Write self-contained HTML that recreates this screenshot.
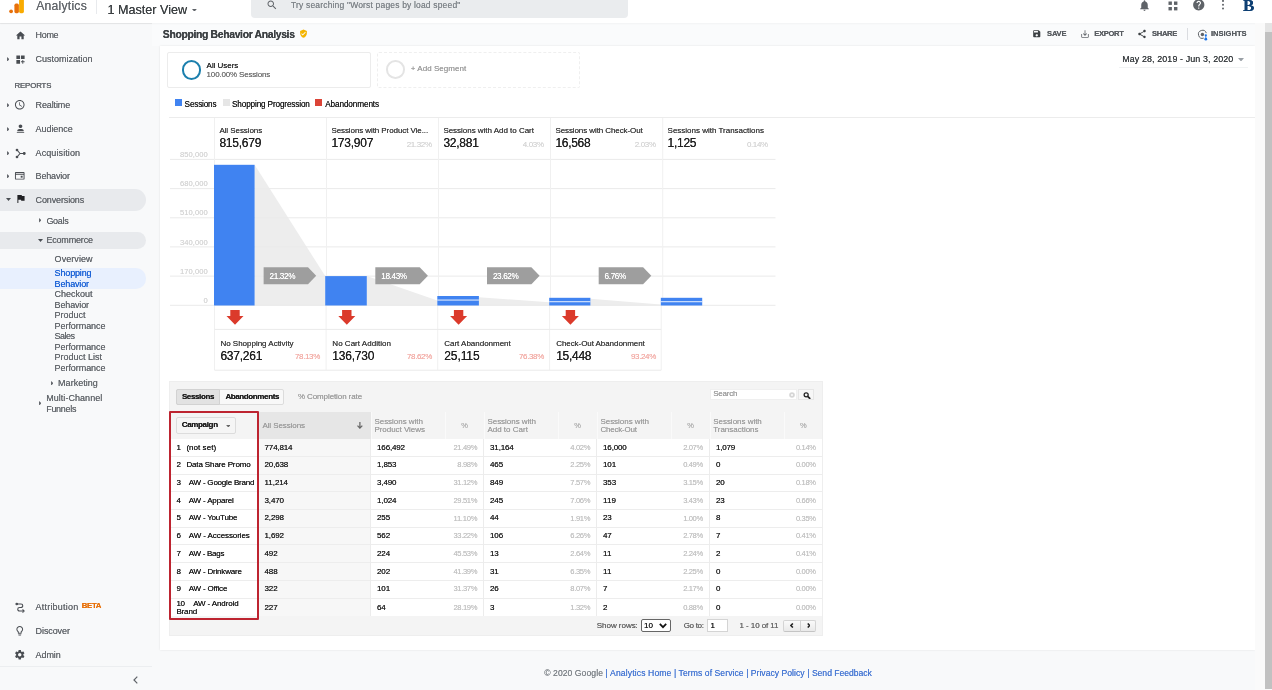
<!DOCTYPE html>
<html lang="en"><head><meta charset="utf-8"><title>Shopping Behavior Analysis - Analytics</title>
<style>
html,body{margin:0;padding:0}
body{width:1272px;height:690px;overflow:hidden;position:relative;background:#f8f9fa;font-family:"Liberation Sans",sans-serif;}
#app{position:absolute;left:0;top:0;width:1272px;height:690px;overflow:hidden;will-change:transform}
#app>div,#app>svg,.t,.i{position:absolute}
.t{white-space:nowrap;display:block;text-shadow:0 0 .4px currentColor}
a.t{text-decoration:none}

</style></head>
<body>
<div id="app">
<div style="left:152px;top:23px;width:1113px;height:23px;background:#fafbfc;"></div>
<div style="left:159.5px;top:45.7px;width:1095px;height:604px;background:#fff;box-shadow:0 0 2px rgba(0,0,0,.10);"></div>
<div style="left:0px;top:0px;width:1272px;height:23.4px;background:#fff;box-shadow:0 1px 1.5px rgba(0,0,0,.035);"></div>
<div style="left:0px;top:23px;width:152px;height:1px;background:linear-gradient(rgba(0,0,0,.09),rgba(0,0,0,.02));"></div>
<div style="left:1255px;top:23px;width:17px;height:667px;background:#fafafa;"></div>
<div style="left:1265px;top:23px;width:7px;height:9px;background:#e4e4e4;"></div>
<div style="left:1265px;top:32px;width:7px;height:656.5px;background:#c1c1c1;"></div>
<svg class="i" style="left:8px;top:0" width="20" height="14" viewBox="0 0 20 14"><rect x="11.1" y="-4" width="4.8" height="17.2" rx="1.6" fill="#f9ab00"/><rect x="6.4" y="3.6" width="4.5" height="9.6" rx="1.6" fill="#e8710a"/><circle cx="3.1" cy="11.3" r="1.9" fill="#e8710a"/></svg>
<span class="t" id="t0" style="top:-2.00px;font-size:12.2px;line-height:16px;color:#64686d;left:36.2px;letter-spacing:0.224px;">Analytics</span>
<div style="left:96px;top:0px;width:1px;height:14px;background:#e8eaed;"></div>
<span class="t" id="t1" style="top:2.00px;font-size:12.6px;line-height:17px;color:#3c4043;left:107.4px;letter-spacing:0.011px;">1 Master View</span>
<svg class="i" style="left:192.4px;top:8.6px" width="4.8" height="2.8" viewBox="0 0 7 4"><path d="M0 0h7L3.5 4z" fill="#5f6368"/></svg>
<div style="left:250.5px;top:0px;width:377.5px;height:18.3px;background:#eaecee;border-radius:0 0 4px 4px;"></div>
<svg class="i" style="left:265.50px;top:-1.00px" width="12" height="12" viewBox="0 0 24 24" fill="#5f6368" ><path d="M15.5 14h-.79l-.28-.27C15.41 12.59 16 11.11 16 9.5 16 5.91 13.09 3 9.5 3S3 5.91 3 9.5 5.91 16 9.5 16c1.61 0 3.09-.59 4.23-1.57l.27.28v.79l5 4.99L20.49 19l-4.99-5zm-6 0C7.01 14 5 11.99 5 9.5S7.01 5 9.5 5 14 7.01 14 9.5 11.99 14 9.5 14z"/></svg>
<span class="t" id="t2" style="top:-1.00px;font-size:8.5px;line-height:12px;color:#80868b;left:291px;letter-spacing:0.173px;">Try searching "Worst pages by load speed"</span>
<svg class="i" style="left:1138.00px;top:-1.50px" width="13" height="13" viewBox="0 0 24 24" fill="#5f6368" ><path d="M12 22c1.1 0 2-.9 2-2h-4c0 1.1.89 2 2 2zm6-6v-5c0-3.07-1.64-5.64-4.5-6.32V4c0-.83-.67-1.5-1.5-1.5s-1.5.67-1.5 1.5v.68C7.63 5.36 6 7.92 6 11v5l-2 2v1h16v-1l-2-2z"/></svg>
<svg class="i" style="left:1168px;top:0.5px" width="10" height="10" viewBox="0 0 10 10" fill="#5f6368"><rect x="0.5" y="0.5" width="3.4" height="3.4"/><rect x="6" y="0.5" width="3.4" height="3.4"/><rect x="0.5" y="6" width="3.4" height="3.4"/><rect x="6" y="6" width="3.4" height="3.4"/></svg>
<svg class="i" style="left:1192.25px;top:-1.75px" width="13.5" height="13.5" viewBox="0 0 24 24" fill="#5f6368" ><path d="M12 2C6.48 2 2 6.48 2 12s4.48 10 10 10 10-4.48 10-10S17.52 2 12 2zm1 17h-2v-2h2v2zm2.07-7.75l-.9.92C13.45 12.9 13 13.5 13 15h-2v-.5c0-1.1.45-2.1 1.17-2.83l1.24-1.26c.37-.36.59-.86.59-1.41 0-1.1-.9-2-2-2s-2 .9-2 2H8c0-2.21 1.79-4 4-4s4 1.79 4 4c0 .88-.36 1.68-.93 2.25z"/></svg>
<svg class="i" style="left:1220.5px;top:-1px" width="4" height="13" viewBox="0 0 4 13" fill="#5f6368"><circle cx="2" cy="1.9" r="1"/><circle cx="2" cy="5.7" r="1"/><circle cx="2" cy="9.5" r="1"/></svg>
<span class="t" id="t3" style="top:-4.00px;font-size:17px;line-height:20px;color:#0d3f73;font-weight:700;left:1243px;font-family:'Liberation Serif',serif;">B</span>
<div style="left:0px;top:189px;width:146px;height:21.5px;background:#e8eaed;border-radius:0 11px 11px 0;"></div>
<div style="left:0px;top:231.5px;width:146px;height:17px;background:#e8eaed;border-radius:0 9px 9px 0;"></div>
<div style="left:0px;top:267.8px;width:146px;height:21.6px;background:#e8f0fe;border-radius:0 10px 10px 0;"></div>
<svg class="i" style="left:14.50px;top:29.50px" width="11" height="11" viewBox="0 0 24 24" fill="#494d52" ><path d="M10 20v-6h4v6h5v-8h3L12 3 2 12h3v8z"/></svg>
<span class="t" id="t4" style="top:29.00px;font-size:9px;line-height:12px;color:#64686d;left:35.6px;letter-spacing:-0.329px;">Home</span>
<svg class="i" style="left:6.7px;top:56.7px" width="2.7" height="4.6" viewBox="0 0 3 5" fill="#64686d"><path d="M0 0l3 2.5L0 5z"/></svg>
<svg class="i" style="left:14.50px;top:53.50px" width="11" height="11" viewBox="0 0 24 24" fill="#494d52" ><path d="M3 3h8v8H3zM13 3h8v8h-8zM3 13h8v8H3zM18 13h-2v3h-3v2h3v3h2v-3h3v-2h-3z"/></svg>
<span class="t" id="t5" style="top:53.00px;font-size:9px;line-height:12px;color:#64686d;left:35.6px;">Customization</span>
<span class="t" id="t6" style="top:80.00px;font-size:7.8px;line-height:11px;color:#64686d;left:14.4px;letter-spacing:-0.080px;-webkit-text-stroke:0.15px #5f6368;">REPORTS</span>
<svg class="i" style="left:6.7px;top:102.7px" width="2.7" height="4.6" viewBox="0 0 3 5" fill="#64686d"><path d="M0 0l3 2.5L0 5z"/></svg>
<svg class="i" style="left:14.25px;top:99.25px" width="11.5" height="11.5" viewBox="0 0 24 24" fill="#494d52" ><path d="M11.99 2C6.47 2 2 6.48 2 12s4.47 10 9.99 10C17.52 22 22 17.52 22 12S17.52 2 11.99 2zM12 20c-4.42 0-8-3.58-8-8s3.58-8 8-8 8 3.58 8 8-3.58 8-8 8zm.5-13H11v6l5.25 3.15.75-1.23-4.5-2.67z"/></svg>
<span class="t" id="t7" style="top:99.00px;font-size:9px;line-height:12px;color:#64686d;left:35.6px;letter-spacing:-0.127px;">Realtime</span>
<svg class="i" style="left:6.7px;top:126.7px" width="2.7" height="4.6" viewBox="0 0 3 5" fill="#64686d"><path d="M0 0l3 2.5L0 5z"/></svg>
<svg class="i" style="left:14.50px;top:123.00px" width="11" height="11" viewBox="0 0 24 24" fill="#494d52" ><path d="M12 11c2.21 0 4-1.79 4-4s-1.79-4-4-4-4 1.79-4 4 1.79 4 4 4zm0 2c-2.67 0-7 1.1-7 3.2V18h14v-1.8c0-2.1-4.33-3.2-7-3.2zM4 19.5h16V21H4z"/></svg>
<span class="t" id="t8" style="top:123.00px;font-size:9px;line-height:12px;color:#64686d;left:35.6px;letter-spacing:-0.066px;">Audience</span>
<svg class="i" style="left:6.7px;top:150.7px" width="2.7" height="4.6" viewBox="0 0 3 5" fill="#64686d"><path d="M0 0l3 2.5L0 5z"/></svg>
<svg class="i" style="left:14.5px;top:147.5px" width="11" height="11" viewBox="0 0 22 22" fill="none" stroke="#494d52" stroke-width="2.2"><path d="M4 4l6 7-6 7M10 11h7"/><circle cx="4" cy="4" r="1.6" fill="#494d52"/><circle cx="4" cy="18" r="1.6" fill="#494d52"/><circle cx="18.5" cy="11" r="1.8" fill="#494d52"/></svg>
<span class="t" id="t9" style="top:147.00px;font-size:9px;line-height:12px;color:#64686d;left:35.6px;letter-spacing:0.088px;">Acquisition</span>
<svg class="i" style="left:6.7px;top:173.7px" width="2.7" height="4.6" viewBox="0 0 3 5" fill="#64686d"><path d="M0 0l3 2.5L0 5z"/></svg>
<svg class="i" style="left:14.25px;top:170.25px" width="11.5" height="11.5" viewBox="0 0 24 24" fill="#494d52" ><path d="M20 4H4c-1.1 0-2 .9-2 2v12c0 1.1.9 2 2 2h16c1.1 0 2-.9 2-2V6c0-1.1-.9-2-2-2zm0 14H4V10h16v8zM4 8V6h16v2z"/><path d="M14 12h4v4h-4z"/></svg>
<span class="t" id="t10" style="top:170.00px;font-size:9px;line-height:12px;color:#64686d;left:35.6px;letter-spacing:-0.166px;">Behavior</span>
<svg class="i" style="left:6.0px;top:198.0px" width="5" height="3" viewBox="0 0 5 3" fill="#494d52"><path d="M0 0h5L2.5 3z"/></svg>
<svg class="i" style="left:14.75px;top:193.25px" width="11.5" height="11.5" viewBox="0 0 24 24" fill="#202124" ><path d="M14.4 6L14 4H5v17h2v-7h5.6l.4 2h7V6z"/></svg>
<span class="t" id="t11" style="top:194.00px;font-size:9px;line-height:12px;color:#64686d;left:35.6px;letter-spacing:-0.139px;">Conversions</span>
<svg class="i" style="left:38.7px;top:218.2px" width="2.7" height="4.6" viewBox="0 0 3 5" fill="#64686d"><path d="M0 0l3 2.5L0 5z"/></svg>
<span class="t" id="t12" style="top:215.00px;font-size:9px;line-height:12px;color:#64686d;left:46.4px;letter-spacing:-0.303px;">Goals</span>
<svg class="i" style="left:38.0px;top:238.5px" width="5" height="3" viewBox="0 0 5 3" fill="#494d52"><path d="M0 0h5L2.5 3z"/></svg>
<span class="t" id="t13" style="top:234.00px;font-size:9px;line-height:12px;color:#64686d;left:46.4px;letter-spacing:-0.180px;">Ecommerce</span>
<span class="t" id="t14" style="top:253.00px;font-size:9px;line-height:12px;color:#64686d;left:54.6px;letter-spacing:0.061px;">Overview</span>
<span class="t" id="t15" style="top:267.00px;font-size:9px;line-height:12px;color:#1a62d6;left:54.6px;letter-spacing:-0.156px;">Shopping</span>
<span class="t" id="t16" style="top:278.00px;font-size:9px;line-height:12px;color:#1a62d6;left:54.6px;letter-spacing:-0.154px;">Behavior</span>
<span class="t" id="t17" style="top:288.00px;font-size:9px;line-height:12px;color:#64686d;left:54.6px;">Checkout</span>
<span class="t" id="t18" style="top:299.00px;font-size:9px;line-height:12px;color:#64686d;left:54.6px;letter-spacing:-0.154px;">Behavior</span>
<span class="t" id="t19" style="top:309.00px;font-size:9px;line-height:12px;color:#64686d;left:54.6px;letter-spacing:-0.004px;">Product</span>
<span class="t" id="t20" style="top:320.00px;font-size:9px;line-height:12px;color:#64686d;left:54.6px;letter-spacing:-0.066px;">Performance</span>
<span class="t" id="t21" style="top:330.00px;font-size:9px;line-height:12px;color:#64686d;left:54.6px;letter-spacing:-0.543px;">Sales</span>
<span class="t" id="t22" style="top:341.00px;font-size:9px;line-height:12px;color:#64686d;left:54.6px;letter-spacing:-0.066px;">Performance</span>
<span class="t" id="t23" style="top:351.00px;font-size:9px;line-height:12px;color:#64686d;left:54.6px;">Product List</span>
<span class="t" id="t24" style="top:362.00px;font-size:9px;line-height:12px;color:#64686d;left:54.6px;letter-spacing:-0.066px;">Performance</span>
<svg class="i" style="left:50.7px;top:380.7px" width="2.7" height="4.6" viewBox="0 0 3 5" fill="#64686d"><path d="M0 0l3 2.5L0 5z"/></svg>
<span class="t" id="t25" style="top:377.00px;font-size:9px;line-height:12px;color:#64686d;left:58.1px;letter-spacing:0.032px;">Marketing</span>
<svg class="i" style="left:38.7px;top:400.7px" width="2.7" height="4.6" viewBox="0 0 3 5" fill="#64686d"><path d="M0 0l3 2.5L0 5z"/></svg>
<span class="t" id="t26" style="top:392.00px;font-size:9px;line-height:12px;color:#64686d;left:46.2px;letter-spacing:0.044px;">Multi-Channel</span>
<span class="t" id="t27" style="top:403.00px;font-size:9px;line-height:12px;color:#64686d;left:46.2px;letter-spacing:-0.290px;">Funnels</span>
<svg class="i" style="left:14.5px;top:601.5px" width="11" height="11" viewBox="0 0 22 22" fill="none" stroke="#494d52" stroke-width="2.2"><path d="M5 4h7a3.5 3.5 0 010 7H9a3.5 3.5 0 000 7h8"/><path d="M15 15l3.2 3-3.2 3" /><circle cx="3.5" cy="4" r="1.6" fill="#494d52"/></svg>
<span class="t" id="t28" style="top:601.00px;font-size:9px;line-height:12px;color:#64686d;left:35.6px;letter-spacing:0.206px;">Attribution</span>
<span class="t" id="t29" style="top:600.00px;font-size:7.8px;line-height:11px;color:#e8710a;font-weight:700;left:81.8px;letter-spacing:-0.339px;">BETA</span>
<svg class="i" style="left:14.25px;top:625.25px" width="11.5" height="11.5" viewBox="0 0 24 24" fill="#494d52" ><path d="M9 21c0 .55.45 1 1 1h4c.55 0 1-.45 1-1v-1H9v1zm3-19C8.14 2 5 5.14 5 9c0 2.38 1.19 4.47 3 5.74V17c0 .55.45 1 1 1h6c.55 0 1-.45 1-1v-2.26c1.81-1.27 3-3.36 3-5.74 0-3.86-3.14-7-7-7zm2.85 11.1l-.85.6V16h-4v-2.3l-.85-.6C7.8 12.16 7 10.63 7 9c0-2.76 2.24-5 5-5s5 2.24 5 5c0 1.63-.8 3.16-2.15 4.1z"/></svg>
<span class="t" id="t30" style="top:625.00px;font-size:9px;line-height:12px;color:#64686d;left:35.6px;letter-spacing:-0.102px;">Discover</span>
<svg class="i" style="left:14.25px;top:649.25px" width="11.5" height="11.5" viewBox="0 0 24 24" fill="#494d52" ><path d="M19.43 12.98c.04-.32.07-.64.07-.98s-.03-.66-.07-.98l2.11-1.65c.19-.15.24-.42.12-.64l-2-3.46c-.12-.22-.39-.3-.61-.22l-2.49 1c-.52-.4-1.08-.73-1.69-.98l-.38-2.65C14.46 2.18 14.25 2 14 2h-4c-.25 0-.46.18-.49.42l-.38 2.65c-.61.25-1.17.59-1.69.98l-2.49-1c-.23-.09-.49 0-.61.22l-2 3.46c-.13.22-.07.49.12.64l2.11 1.65c-.04.32-.07.65-.07.98s.03.66.07.98l-2.11 1.65c-.19.15-.24.42-.12.64l2 3.46c.12.22.39.3.61.22l2.49-1c.52.4 1.08.73 1.69.98l.38 2.65c.03.24.24.42.49.42h4c.25 0 .46-.18.49-.42l.38-2.65c.61-.25 1.17-.59 1.69-.98l2.49 1c.23.09.49 0 .61-.22l2-3.46c.12-.22.07-.49-.12-.64l-2.11-1.65zM12 15.5c-1.93 0-3.5-1.57-3.5-3.5s1.57-3.5 3.5-3.5 3.5 1.57 3.5 3.5-1.57 3.5-3.5 3.5z"/></svg>
<span class="t" id="t31" style="top:649.00px;font-size:9px;line-height:12px;color:#64686d;left:35.6px;letter-spacing:-0.103px;">Admin</span>
<div style="left:0px;top:665.7px;width:152px;height:1px;background:#eceef0;"></div>
<svg class="i" style="left:132.5px;top:676px" width="5" height="8" viewBox="0 0 5 8" fill="none" stroke="#5f6368" stroke-width="1.2"><path d="M4.3 0.7L1 4l3.3 3.3"/></svg>
<span class="t" id="t32" style="top:28.00px;font-size:10.4px;line-height:14px;color:#3c4043;font-weight:700;left:162.8px;letter-spacing:-0.335px;">Shopping Behavior Analysis</span>
<svg class="i" style="left:298.90px;top:29.10px" width="9" height="9" viewBox="0 0 24 24" fill="#f4b400" ><path d="M12 1L3 5v6c0 5.55 3.84 10.74 9 12 5.16-1.26 9-6.45 9-12V5l-9-4zm-2 16l-4-4 1.41-1.41L10 14.17l6.59-6.59L18 9l-8 8z"/></svg>
<svg class="i" style="left:1031.85px;top:29.25px" width="9.5" height="9.5" viewBox="0 0 24 24" fill="#3c4043" ><path d="M17 3H5c-1.11 0-2 .9-2 2v14c0 1.1.89 2 2 2h14c1.1 0 2-.9 2-2V7l-4-4zm-5 16c-1.66 0-3-1.34-3-3s1.34-3 3-3 3 1.34 3 3-1.34 3-3 3zm3-10H5V5h10v4z"/></svg>
<span class="t" id="t33" style="top:29.00px;font-size:7.6px;line-height:10px;color:#5a5e63;font-weight:700;left:1047.1px;letter-spacing:-0.231px;">SAVE</span>
<svg class="i" style="left:1079.70px;top:29.00px" width="10" height="10" viewBox="0 0 24 24" fill="#64686d" ><path d="M19 12v7H5v-7H3v7c0 1.1.9 2 2 2h14c1.1 0 2-.9 2-2v-7h-2zm-6 .67l2.59-2.58L17 11.5l-5 5-5-5 1.41-1.41L11 12.67V3h2z"/></svg>
<span class="t" id="t34" style="top:29.00px;font-size:7.6px;line-height:10px;color:#5a5e63;font-weight:700;left:1094.3px;letter-spacing:-0.322px;">EXPORT</span>
<svg class="i" style="left:1137.00px;top:29.00px" width="10" height="10" viewBox="0 0 24 24" fill="#3c4043" ><path d="M18 16.08c-.76 0-1.44.3-1.96.77L8.91 12.7c.05-.23.09-.46.09-.7s-.04-.47-.09-.7l7.05-4.11c.54.5 1.25.81 2.04.81 1.660 0 3-1.34 3-3s-1.34-3-3-3-3 1.34-3 3c0 .24.04.47.09.7L8.040 9.810C7.500 9.310 6.790 9 6 9c-1.660 0-3 1.340-3 3s1.340 3 3 3c.790 0 1.500-.31 2.040-.81l7.120 4.160c-.05.21-.08.43-.08.65 0 1.610 1.310 2.920 2.920 2.920 1.610 0 2.920-1.310 2.920-2.920s-1.310-2.920-2.920-2.920z"/></svg>
<span class="t" id="t35" style="top:29.00px;font-size:7.6px;line-height:10px;color:#5a5e63;font-weight:700;left:1152px;letter-spacing:-0.319px;">SHARE</span>
<div style="left:1187px;top:28px;width:1px;height:12px;background:#dadce0;"></div>
<svg class="i" style="left:1196.5px;top:28.5px" width="11" height="12" viewBox="0 0 22 24" fill="none"><path d="M13.5 18.2A8 8 0 1 1 18.6 8.2" stroke="#5f6368" stroke-width="2"/><circle cx="10.8" cy="11" r="3.4" fill="#5f6368"/><circle cx="17.6" cy="12.6" r="2.3" fill="#1a73e8"/><circle cx="17.6" cy="20.4" r="2.8" fill="#1a73e8"/><path d="M17.6 13v7" stroke="#1a73e8" stroke-width="1.6"/></svg>
<span class="t" id="t36" style="top:29.00px;font-size:7.6px;line-height:10px;color:#5a5e63;font-weight:700;left:1211px;letter-spacing:-0.047px;">INSIGHTS</span>
<span class="t" id="t37" style="top:53.00px;font-size:8.9px;line-height:12px;color:#3c4043;left:1122.3px;letter-spacing:0.117px;">May 28, 2019 - Jun 3, 2020</span>
<svg class="i" style="left:1237.5px;top:57.5px" width="6" height="3.5" viewBox="0 0 6 3.5"><path d="M0 0h6L3 3.5z" fill="#9aa0a6"/></svg>
<div style="left:1119px;top:67px;width:129px;height:1px;background:#f1f3f4;"></div>
<div style="left:166.5px;top:52px;width:202px;height:34.3px;background:#fff;border:1px solid #ececec;border-radius:2px;"></div>
<div style="left:181.8px;top:60.2px;width:15.4px;height:15.4px;border:2.2px solid #1b7fad;border-radius:50%;"></div>
<span class="t" id="t38" style="top:60.00px;font-size:8px;line-height:11px;color:#2c2c2c;left:206.6px;letter-spacing:-0.035px;">All Users</span>
<span class="t" id="t39" style="top:69.00px;font-size:8px;line-height:11px;color:#757575;left:206.6px;letter-spacing:-0.173px;">100.00% Sessions</span>
<div style="left:376.5px;top:52px;width:201px;height:34.3px;background:#fff;border:1px dashed #efefef;border-radius:2px;"></div>
<div style="left:386.1px;top:60.4px;width:14.6px;height:14.6px;border:2.1px solid #e4e4e4;border-radius:50%;"></div>
<span class="t" id="t40" style="top:63.00px;font-size:8px;line-height:11px;color:#9e9e9e;left:410.8px;letter-spacing:0.043px;">+ Add Segment</span>
<div style="left:175px;top:99.4px;width:6.8px;height:6.8px;background:#4083f1;"></div>
<span class="t" id="t41" style="top:99.00px;font-size:8.2px;line-height:11px;color:#212121;left:184.6px;letter-spacing:-0.179px;">Sessions</span>
<div style="left:222.8px;top:99.4px;width:6.8px;height:6.8px;background:#e6e6e6;"></div>
<span class="t" id="t42" style="top:99.00px;font-size:8.2px;line-height:11px;color:#212121;left:232px;letter-spacing:-0.139px;">Shopping Progression</span>
<div style="left:315.4px;top:99.4px;width:6.8px;height:6.8px;background:#db4437;"></div>
<span class="t" id="t43" style="top:99.00px;font-size:8.2px;line-height:11px;color:#212121;left:325.2px;letter-spacing:-0.107px;">Abandonments</span>
<svg class="i" style="left:160px;top:110px" width="640" height="270" viewBox="160 110 640 270"><polygon points="254.6,164.8 325.2,276.1 325.2,305.5 254.6,305.5" fill="#ededed"/><polygon points="366.8,276.1 437.3,300.5 437.3,305.5 366.8,305.5" fill="#ededed"/><polygon points="478.90000000000003,297.2 549.2,302.2 549.2,305.5 478.90000000000003,305.5" fill="#ededed"/><polygon points="590.4000000000001,298.8 660.8,304.5 660.8,305.5 590.4000000000001,305.5" fill="#ededed"/><g stroke="#eaeaea" stroke-width="1"><line x1="170" x2="775.5" y1="159.4" y2="159.4"/><line x1="170" x2="775.5" y1="188.6" y2="188.6"/><line x1="170" x2="775.5" y1="217.8" y2="217.8"/><line x1="170" x2="775.5" y1="246.9" y2="246.9"/><line x1="170" x2="775.5" y1="276.1" y2="276.1"/><line x1="170" x2="775.5" y1="305.3" y2="305.3"/><line x1="214.5" x2="214.5" y1="117.5" y2="305.5" stroke="#f0f0f0"/><line x1="326.5" x2="326.5" y1="117.5" y2="305.5" stroke="#f0f0f0"/><line x1="438.5" x2="438.5" y1="117.5" y2="305.5" stroke="#f0f0f0"/><line x1="550.5" x2="550.5" y1="117.5" y2="305.5" stroke="#f0f0f0"/><line x1="662.7" x2="662.7" y1="117.5" y2="305.5" stroke="#f0f0f0"/><line x1="214.5" x2="214.5" y1="305.5" y2="370.2" stroke="#f0f0f0"/><line x1="326.1" x2="326.1" y1="305.5" y2="370.2" stroke="#f0f0f0"/><line x1="437.7" x2="437.7" y1="305.5" y2="370.2" stroke="#f0f0f0"/><line x1="549.6" x2="549.6" y1="305.5" y2="370.2" stroke="#f0f0f0"/><line x1="661.2" x2="661.2" y1="305.5" y2="370.2" stroke="#f0f0f0"/><line x1="214.5" x2="661.2" y1="329.4" y2="329.4"/><line x1="214.5" x2="661.2" y1="370.2" y2="370.2"/></g><rect x="214" y="164.8" width="40.6" height="140.7" fill="#4083f1"/><rect x="325.2" y="276.1" width="41.6" height="29.4" fill="#4083f1"/><rect x="437.3" y="296" width="41.6" height="9.5" fill="#4083f1"/><rect x="437.3" y="299.6" width="41.6" height="0.9" fill="#fff"/><rect x="549.2" y="297.8" width="41.2" height="7.7" fill="#4083f1"/><rect x="549.2" y="301.3" width="41.2" height="0.9" fill="#fff"/><rect x="660.8" y="297.8" width="41.4" height="7.7" fill="#4083f1"/><rect x="660.8" y="301.3" width="41.4" height="0.9" fill="#fff"/><polygon points="263.59999999999997,267.2 308.0,267.2 316.2,275.75 308.0,284.3 263.59999999999997,284.3" fill="#9e9e9e"/><polygon points="375.29999999999995,267.2 419.7,267.2 427.9,275.75 419.7,284.3 375.29999999999995,284.3" fill="#9e9e9e"/><polygon points="487.0,267.2 531.4,267.2 539.6,275.75 531.4,284.3 487.0,284.3" fill="#9e9e9e"/><polygon points="598.6999999999999,267.2 643.0999999999999,267.2 651.3,275.75 643.0999999999999,284.3 598.6999999999999,284.3" fill="#9e9e9e"/><polygon points="230.3,310 239.7,310 239.7,316 243.5,316 235.0,324.8 226.5,316 230.3,316" fill="#db3a2b"/><polygon points="342.1,310 351.5,310 351.5,316 355.3,316 346.8,324.8 338.3,316 342.1,316" fill="#db3a2b"/><polygon points="453.90000000000003,310 463.3,310 463.3,316 467.1,316 458.6,324.8 450.1,316 453.90000000000003,316" fill="#db3a2b"/><polygon points="565.6999999999999,310 575.1,310 575.1,316 578.9,316 570.4,324.8 561.9,316 565.6999999999999,316" fill="#db3a2b"/></svg>
<div style="left:169px;top:117px;width:1085.5px;height:1px;background:#ececec;"></div>
<span class="t" id="t44" style="top:150.00px;font-size:7.6px;line-height:10px;color:#d6d6d6;right:1064.20px;letter-spacing:0.050px;margin-right:-0.050px;">850,000</span>
<span class="t" id="t45" style="top:179.00px;font-size:7.6px;line-height:10px;color:#d6d6d6;right:1064.20px;letter-spacing:0.050px;margin-right:-0.050px;">680,000</span>
<span class="t" id="t46" style="top:208.00px;font-size:7.6px;line-height:10px;color:#d6d6d6;right:1064.20px;letter-spacing:0.050px;margin-right:-0.050px;">510,000</span>
<span class="t" id="t47" style="top:238.00px;font-size:7.6px;line-height:10px;color:#d6d6d6;right:1064.20px;letter-spacing:0.050px;margin-right:-0.050px;">340,000</span>
<span class="t" id="t48" style="top:267.00px;font-size:7.6px;line-height:10px;color:#d6d6d6;right:1064.20px;letter-spacing:0.050px;margin-right:-0.050px;">170,000</span>
<span class="t" id="t49" style="top:296.00px;font-size:7.6px;line-height:10px;color:#d6d6d6;right:1064.20px;">0</span>
<span class="t" id="t50" style="top:125.00px;font-size:8px;line-height:11px;color:#424242;left:219.4px;letter-spacing:-0.065px;">All Sessions</span>
<span class="t" id="t51" style="top:135.00px;font-size:12px;line-height:16px;color:#212121;left:219.4px;letter-spacing:-0.227px;">815,679</span>
<span class="t" id="t52" style="top:125.00px;font-size:8px;line-height:11px;color:#424242;left:331.4px;letter-spacing:-0.083px;">Sessions with Product Vie...</span>
<span class="t" id="t53" style="top:135.00px;font-size:12px;line-height:16px;color:#212121;left:331.4px;letter-spacing:-0.227px;">173,907</span>
<span class="t" id="t54" style="top:139.00px;font-size:8px;line-height:11px;color:#d6d6d6;right:840.00px;letter-spacing:-0.357px;margin-right:0.357px;">21.32%</span>
<span class="t" id="t55" style="top:125.00px;font-size:8px;line-height:11px;color:#424242;left:443.4px;letter-spacing:-0.026px;">Sessions with Add to Cart</span>
<span class="t" id="t56" style="top:135.00px;font-size:12px;line-height:16px;color:#212121;left:443.4px;letter-spacing:-0.251px;">32,881</span>
<span class="t" id="t57" style="top:139.00px;font-size:8px;line-height:11px;color:#d6d6d6;right:728.00px;letter-spacing:-0.338px;margin-right:0.338px;">4.03%</span>
<span class="t" id="t58" style="top:125.00px;font-size:8px;line-height:11px;color:#424242;left:555.4px;letter-spacing:-0.090px;">Sessions with Check-Out</span>
<span class="t" id="t59" style="top:135.00px;font-size:12px;line-height:16px;color:#212121;left:555.4px;letter-spacing:-0.284px;">16,568</span>
<span class="t" id="t60" style="top:139.00px;font-size:8px;line-height:11px;color:#d6d6d6;right:616.00px;letter-spacing:-0.338px;margin-right:0.338px;">2.03%</span>
<span class="t" id="t61" style="top:125.00px;font-size:8px;line-height:11px;color:#424242;left:667.6px;letter-spacing:-0.008px;">Sessions with Transactions</span>
<span class="t" id="t62" style="top:135.00px;font-size:12px;line-height:16px;color:#212121;left:667.6px;letter-spacing:-0.286px;">1,125</span>
<span class="t" id="t63" style="top:139.00px;font-size:8px;line-height:11px;color:#d6d6d6;right:503.80px;letter-spacing:-0.338px;margin-right:0.338px;">0.14%</span>
<span class="t" id="t64" style="top:271.00px;font-size:8.2px;line-height:11px;color:#fff;left:269.5px;letter-spacing:-0.364px;">21.32%</span>
<span class="t" id="t65" style="top:271.00px;font-size:8.2px;line-height:11px;color:#fff;left:381.2px;letter-spacing:-0.364px;">18.43%</span>
<span class="t" id="t66" style="top:271.00px;font-size:8.2px;line-height:11px;color:#fff;left:492.9px;letter-spacing:-0.364px;">23.62%</span>
<span class="t" id="t67" style="top:271.00px;font-size:8.2px;line-height:11px;color:#fff;left:604.6px;letter-spacing:-0.384px;">6.76%</span>
<span class="t" id="t68" style="top:338.00px;font-size:8px;line-height:11px;color:#424242;left:220.4px;letter-spacing:-0.009px;">No Shopping Activity</span>
<span class="t" id="t69" style="top:348.00px;font-size:12px;line-height:16px;color:#212121;left:220.4px;letter-spacing:-0.227px;">637,261</span>
<span class="t" id="t70" style="top:351.00px;font-size:8px;line-height:11px;color:#f3aea8;right:951.70px;letter-spacing:-0.357px;margin-right:0.357px;">78.13%</span>
<span class="t" id="t71" style="top:338.00px;font-size:8px;line-height:11px;color:#424242;left:332.33000000000004px;letter-spacing:0.021px;">No Cart Addition</span>
<span class="t" id="t72" style="top:348.00px;font-size:12px;line-height:16px;color:#212121;left:332.33000000000004px;letter-spacing:-0.227px;">136,730</span>
<span class="t" id="t73" style="top:351.00px;font-size:8px;line-height:11px;color:#f3aea8;right:839.70px;letter-spacing:-0.357px;margin-right:0.357px;">78.62%</span>
<span class="t" id="t74" style="top:338.00px;font-size:8px;line-height:11px;color:#424242;left:444.26px;letter-spacing:-0.014px;">Cart Abandonment</span>
<span class="t" id="t75" style="top:348.00px;font-size:12px;line-height:16px;color:#212121;left:444.26px;letter-spacing:-0.102px;">25,115</span>
<span class="t" id="t76" style="top:351.00px;font-size:8px;line-height:11px;color:#f3aea8;right:727.70px;letter-spacing:-0.357px;margin-right:0.357px;">76.38%</span>
<span class="t" id="t77" style="top:338.00px;font-size:8px;line-height:11px;color:#424242;left:556.19px;letter-spacing:-0.064px;">Check-Out Abandonment</span>
<span class="t" id="t78" style="top:348.00px;font-size:12px;line-height:16px;color:#212121;left:556.19px;letter-spacing:-0.284px;">15,448</span>
<span class="t" id="t79" style="top:351.00px;font-size:8px;line-height:11px;color:#f3aea8;right:615.70px;letter-spacing:-0.357px;margin-right:0.357px;">93.24%</span>
<div style="left:169.8px;top:381.8px;width:652.6px;height:253.6px;background:#f4f4f4;box-shadow:0 0 0 1px #eeeeee;"></div>
<div style="left:176.4px;top:388.8px;width:107.6px;height:16px;background:#f8f8f8;box-sizing:border-box;border:1px solid #dcdcdc;border-radius:2px;"></div>
<div style="left:176.4px;top:388.8px;width:43.6px;height:16px;background:#e2e2e2;box-sizing:border-box;border:1px solid #d2d2d2;border-radius:2px 0 0 2px;"></div>
<span class="t" id="t80" style="top:391.00px;font-size:8px;line-height:11px;color:#212121;font-weight:700;left:181.9px;letter-spacing:-0.368px;">Sessions</span>
<span class="t" id="t81" style="top:391.00px;font-size:8px;line-height:11px;color:#212121;font-weight:700;left:225.4px;letter-spacing:-0.386px;">Abandonments</span>
<span class="t" id="t82" style="top:391.00px;font-size:8px;line-height:11px;color:#9e9e9e;left:297.9px;letter-spacing:-0.101px;">% Completion rate</span>
<div style="left:710.3px;top:389px;width:87.2px;height:11.1px;background:#fff;box-sizing:border-box;border:1px solid #efefef;"></div>
<span class="t" id="t83" style="top:388.00px;font-size:8px;line-height:11px;color:#9e9e9e;left:713.2px;letter-spacing:-0.227px;">Search</span>
<svg class="i" style="left:789.4px;top:391.7px" width="6" height="6" viewBox="0 0 6 6"><circle cx="3" cy="3" r="2.8" fill="#d6d6d6"/><path d="M2 2l2 2M4 2L2 4" stroke="#fff" stroke-width=".7"/></svg>
<div style="left:798.3px;top:389px;width:16.1px;height:11.3px;background:#f7f7f7;box-sizing:border-box;border:1px solid #e6e6e6;"></div>
<svg class="i" style="left:802.6px;top:391.6px" width="8.2" height="7.6" viewBox="0 0 9 9" fill="none" stroke="#222" stroke-width="1.5"><circle cx="3.4" cy="3.4" r="2.4"/><path d="M5.2 5.2L8.2 8.2" stroke-width="2"/></svg>
<div style="left:258px;top:411.5px;width:112.8px;height:27.899999999999977px;background:#e6e6e6;"></div>
<div style="left:370.8px;top:411.5px;width:1px;height:27.899999999999977px;background:#fafafa;"></div>
<div style="left:444.8px;top:411.5px;width:1px;height:27.899999999999977px;background:#fafafa;"></div>
<div style="left:483.8px;top:411.5px;width:1px;height:27.899999999999977px;background:#fafafa;"></div>
<div style="left:557.8px;top:411.5px;width:1px;height:27.899999999999977px;background:#fafafa;"></div>
<div style="left:596.8px;top:411.5px;width:1px;height:27.899999999999977px;background:#fafafa;"></div>
<div style="left:670.8px;top:411.5px;width:1px;height:27.899999999999977px;background:#fafafa;"></div>
<div style="left:709.6px;top:411.5px;width:1px;height:27.899999999999977px;background:#fafafa;"></div>
<div style="left:783.6px;top:411.5px;width:1px;height:27.899999999999977px;background:#fafafa;"></div>
<div style="left:176.4px;top:416.5px;width:59.2px;height:17.6px;background:#f5f5f5;box-sizing:border-box;border:1px solid #dcdcdc;border-radius:2px;"></div>
<span class="t" id="t84" style="top:419.00px;font-size:8px;line-height:11px;color:#212121;font-weight:700;left:181.7px;letter-spacing:-0.334px;">Campaign</span>
<svg class="i" style="left:225.5px;top:424.5px" width="4.6" height="2.6" viewBox="0 0 5 3"><path d="M0 0h5L2.5 3z" fill="#666"/></svg>
<span class="t" id="t85" style="top:420.00px;font-size:8px;line-height:11px;color:#9e9e9e;left:262.4px;letter-spacing:-0.082px;">All Sessions</span>
<svg class="i" style="left:357.2px;top:422px" width="5.8" height="7.2" viewBox="0 0 7 8.5" fill="none" stroke="#666" stroke-width="1.5"><path d="M3.5 0v7.2M0.6 4.3l2.9 3 2.9-3"/></svg>
<span class="t" id="t86" style="top:416.00px;font-size:8px;line-height:11px;color:#a0a0a0;left:374.40000000000003px;letter-spacing:-0.025px;">Sessions with</span>
<span class="t" id="t87" style="top:424.00px;font-size:8px;line-height:11px;color:#a0a0a0;left:374.40000000000003px;letter-spacing:-0.031px;">Product Views</span>
<span class="t" id="t88" style="top:421.00px;font-size:7.5px;line-height:10px;color:#b0b0b0;left:461.3px;">%</span>
<span class="t" id="t89" style="top:416.00px;font-size:8px;line-height:11px;color:#a0a0a0;left:487.40000000000003px;letter-spacing:-0.025px;">Sessions with</span>
<span class="t" id="t90" style="top:424.00px;font-size:8px;line-height:11px;color:#a0a0a0;left:487.40000000000003px;">Add to Cart</span>
<span class="t" id="t91" style="top:421.00px;font-size:7.5px;line-height:10px;color:#b0b0b0;left:574.3px;">%</span>
<span class="t" id="t92" style="top:416.00px;font-size:8px;line-height:11px;color:#a0a0a0;left:600.4px;letter-spacing:-0.025px;">Sessions with</span>
<span class="t" id="t93" style="top:424.00px;font-size:8px;line-height:11px;color:#a0a0a0;left:600.4px;letter-spacing:-0.193px;">Check-Out</span>
<span class="t" id="t94" style="top:421.00px;font-size:7.5px;line-height:10px;color:#b0b0b0;left:687.3px;">%</span>
<span class="t" id="t95" style="top:416.00px;font-size:8px;line-height:11px;color:#a0a0a0;left:713.2px;letter-spacing:-0.025px;">Sessions with</span>
<span class="t" id="t96" style="top:424.00px;font-size:8px;line-height:11px;color:#a0a0a0;left:713.2px;letter-spacing:-0.017px;">Transactions</span>
<span class="t" id="t97" style="top:421.00px;font-size:7.5px;line-height:10px;color:#b0b0b0;left:800.1px;">%</span>
<div style="left:169.6px;top:439.4px;width:652.8px;height:176.80000000000007px;background:#fff;"></div>
<div style="left:258px;top:439.4px;width:112.8px;height:176.80000000000007px;background:#f7f7f7;"></div>
<div style="left:169.6px;top:455.8px;width:652.8px;height:1px;background:#ededed;"></div>
<div style="left:169.6px;top:473.5px;width:652.8px;height:1px;background:#ededed;"></div>
<div style="left:169.6px;top:491.2px;width:652.8px;height:1px;background:#ededed;"></div>
<div style="left:169.6px;top:508.9px;width:652.8px;height:1px;background:#ededed;"></div>
<div style="left:169.6px;top:526.6px;width:652.8px;height:1px;background:#ededed;"></div>
<div style="left:169.6px;top:544.4px;width:652.8px;height:1px;background:#ededed;"></div>
<div style="left:169.6px;top:562.1px;width:652.8px;height:1px;background:#ededed;"></div>
<div style="left:169.6px;top:579.8px;width:652.8px;height:1px;background:#ededed;"></div>
<div style="left:169.6px;top:597.5px;width:652.8px;height:1px;background:#ededed;"></div>
<div style="left:257.5px;top:439.4px;width:1px;height:176.80000000000007px;background:#ececec;"></div>
<div style="left:370.3px;top:439.4px;width:1px;height:176.80000000000007px;background:#ececec;"></div>
<div style="left:483.3px;top:439.4px;width:1px;height:176.80000000000007px;background:#ececec;"></div>
<div style="left:596.3px;top:439.4px;width:1px;height:176.80000000000007px;background:#ececec;"></div>
<div style="left:709.1px;top:439.4px;width:1px;height:176.80000000000007px;background:#ececec;"></div>
<span class="t" id="t98" style="top:442.00px;font-size:8px;line-height:11px;color:#212121;left:176.4px;">1</span>
<span class="t" id="t99" style="top:442.00px;font-size:8px;line-height:11px;color:#212121;left:186.4px;letter-spacing:0.040px;">(not set)</span>
<span class="t" id="t100" style="top:442.00px;font-size:8px;line-height:11px;color:#2a2a2a;left:264.6px;letter-spacing:-0.177px;-webkit-text-stroke:0.04px #2a2a2a;">774,814</span>
<span class="t" id="t101" style="top:442.00px;font-size:8px;line-height:11px;color:#2a2a2a;left:377.1px;letter-spacing:-0.177px;-webkit-text-stroke:0.04px #2a2a2a;">166,492</span>
<span class="t" id="t102" style="top:443.00px;font-size:7.6px;line-height:10px;color:#c4c4c4;right:794.60px;letter-spacing:-0.342px;margin-right:0.342px;">21.49%</span>
<span class="t" id="t103" style="top:442.00px;font-size:8px;line-height:11px;color:#2a2a2a;left:490.1px;letter-spacing:-0.178px;-webkit-text-stroke:0.04px #2a2a2a;">31,164</span>
<span class="t" id="t104" style="top:443.00px;font-size:7.6px;line-height:10px;color:#c4c4c4;right:681.60px;letter-spacing:-0.366px;margin-right:0.366px;">4.02%</span>
<span class="t" id="t105" style="top:442.00px;font-size:8px;line-height:11px;color:#2a2a2a;left:603.0999999999999px;letter-spacing:-0.178px;-webkit-text-stroke:0.04px #2a2a2a;">16,000</span>
<span class="t" id="t106" style="top:443.00px;font-size:7.6px;line-height:10px;color:#c4c4c4;right:568.80px;letter-spacing:-0.366px;margin-right:0.366px;">2.07%</span>
<span class="t" id="t107" style="top:442.00px;font-size:8px;line-height:11px;color:#2a2a2a;left:715.9px;letter-spacing:-0.182px;-webkit-text-stroke:0.04px #2a2a2a;">1,079</span>
<span class="t" id="t108" style="top:443.00px;font-size:7.6px;line-height:10px;color:#c4c4c4;right:456.00px;letter-spacing:-0.366px;margin-right:0.366px;">0.14%</span>
<span class="t" id="t109" style="top:459.00px;font-size:8px;line-height:11px;color:#212121;left:176.4px;">2</span>
<span class="t" id="t110" style="top:459.00px;font-size:8px;line-height:11px;color:#212121;left:186.4px;letter-spacing:-0.129px;">Data Share Promo</span>
<span class="t" id="t111" style="top:459.00px;font-size:8px;line-height:11px;color:#2a2a2a;left:264.6px;letter-spacing:-0.178px;-webkit-text-stroke:0.04px #2a2a2a;">20,638</span>
<span class="t" id="t112" style="top:459.00px;font-size:8px;line-height:11px;color:#2a2a2a;left:377.1px;letter-spacing:-0.182px;-webkit-text-stroke:0.04px #2a2a2a;">1,853</span>
<span class="t" id="t113" style="top:460.00px;font-size:7.6px;line-height:10px;color:#c4c4c4;right:794.60px;letter-spacing:-0.366px;margin-right:0.366px;">8.98%</span>
<span class="t" id="t114" style="top:459.00px;font-size:8px;line-height:11px;color:#2a2a2a;left:490.1px;letter-spacing:-0.173px;-webkit-text-stroke:0.04px #2a2a2a;">465</span>
<span class="t" id="t115" style="top:460.00px;font-size:7.6px;line-height:10px;color:#c4c4c4;right:681.60px;letter-spacing:-0.366px;margin-right:0.366px;">2.25%</span>
<span class="t" id="t116" style="top:459.00px;font-size:8px;line-height:11px;color:#2a2a2a;left:603.0999999999999px;letter-spacing:-0.173px;-webkit-text-stroke:0.04px #2a2a2a;">101</span>
<span class="t" id="t117" style="top:460.00px;font-size:7.6px;line-height:10px;color:#c4c4c4;right:568.80px;letter-spacing:-0.366px;margin-right:0.366px;">0.49%</span>
<span class="t" id="t118" style="top:459.00px;font-size:8px;line-height:11px;color:#2a2a2a;left:715.9px;letter-spacing:-0.173px;-webkit-text-stroke:0.04px #2a2a2a;">0</span>
<span class="t" id="t119" style="top:460.00px;font-size:7.6px;line-height:10px;color:#c4c4c4;right:456.00px;letter-spacing:-0.366px;margin-right:0.366px;">0.00%</span>
<span class="t" id="t120" style="top:477.00px;font-size:8px;line-height:11px;color:#212121;left:176.4px;">3</span>
<span class="t" id="t121" style="top:477.00px;font-size:8px;line-height:11px;color:#212121;left:188.7px;letter-spacing:-0.205px;">AW - Google Brand</span>
<span class="t" id="t122" style="top:477.00px;font-size:8px;line-height:11px;color:#2a2a2a;left:264.6px;letter-spacing:-0.079px;-webkit-text-stroke:0.04px #2a2a2a;">11,214</span>
<span class="t" id="t123" style="top:477.00px;font-size:8px;line-height:11px;color:#2a2a2a;left:377.1px;letter-spacing:-0.182px;-webkit-text-stroke:0.04px #2a2a2a;">3,490</span>
<span class="t" id="t124" style="top:478.00px;font-size:7.6px;line-height:10px;color:#c4c4c4;right:794.60px;letter-spacing:-0.342px;margin-right:0.342px;">31.12%</span>
<span class="t" id="t125" style="top:477.00px;font-size:8px;line-height:11px;color:#2a2a2a;left:490.1px;letter-spacing:-0.173px;-webkit-text-stroke:0.04px #2a2a2a;">849</span>
<span class="t" id="t126" style="top:478.00px;font-size:7.6px;line-height:10px;color:#c4c4c4;right:681.60px;letter-spacing:-0.366px;margin-right:0.366px;">7.57%</span>
<span class="t" id="t127" style="top:477.00px;font-size:8px;line-height:11px;color:#2a2a2a;left:603.0999999999999px;letter-spacing:-0.173px;-webkit-text-stroke:0.04px #2a2a2a;">353</span>
<span class="t" id="t128" style="top:478.00px;font-size:7.6px;line-height:10px;color:#c4c4c4;right:568.80px;letter-spacing:-0.366px;margin-right:0.366px;">3.15%</span>
<span class="t" id="t129" style="top:477.00px;font-size:8px;line-height:11px;color:#2a2a2a;left:715.9px;letter-spacing:-0.173px;-webkit-text-stroke:0.04px #2a2a2a;">20</span>
<span class="t" id="t130" style="top:478.00px;font-size:7.6px;line-height:10px;color:#c4c4c4;right:456.00px;letter-spacing:-0.366px;margin-right:0.366px;">0.18%</span>
<span class="t" id="t131" style="top:495.00px;font-size:8px;line-height:11px;color:#212121;left:176.4px;">4</span>
<span class="t" id="t132" style="top:495.00px;font-size:8px;line-height:11px;color:#212121;left:188.7px;letter-spacing:-0.154px;">AW - Apparel</span>
<span class="t" id="t133" style="top:495.00px;font-size:8px;line-height:11px;color:#2a2a2a;left:264.6px;letter-spacing:-0.182px;-webkit-text-stroke:0.04px #2a2a2a;">3,470</span>
<span class="t" id="t134" style="top:495.00px;font-size:8px;line-height:11px;color:#2a2a2a;left:377.1px;letter-spacing:-0.182px;-webkit-text-stroke:0.04px #2a2a2a;">1,024</span>
<span class="t" id="t135" style="top:496.00px;font-size:7.6px;line-height:10px;color:#c4c4c4;right:794.60px;letter-spacing:-0.342px;margin-right:0.342px;">29.51%</span>
<span class="t" id="t136" style="top:495.00px;font-size:8px;line-height:11px;color:#2a2a2a;left:490.1px;letter-spacing:-0.173px;-webkit-text-stroke:0.04px #2a2a2a;">245</span>
<span class="t" id="t137" style="top:496.00px;font-size:7.6px;line-height:10px;color:#c4c4c4;right:681.60px;letter-spacing:-0.366px;margin-right:0.366px;">7.06%</span>
<span class="t" id="t138" style="top:495.00px;font-size:8px;line-height:11px;color:#2a2a2a;left:603.0999999999999px;letter-spacing:0.025px;-webkit-text-stroke:0.04px #2a2a2a;">119</span>
<span class="t" id="t139" style="top:496.00px;font-size:7.6px;line-height:10px;color:#c4c4c4;right:568.80px;letter-spacing:-0.366px;margin-right:0.366px;">3.43%</span>
<span class="t" id="t140" style="top:495.00px;font-size:8px;line-height:11px;color:#2a2a2a;left:715.9px;letter-spacing:-0.173px;-webkit-text-stroke:0.04px #2a2a2a;">23</span>
<span class="t" id="t141" style="top:496.00px;font-size:7.6px;line-height:10px;color:#c4c4c4;right:456.00px;letter-spacing:-0.366px;margin-right:0.366px;">0.66%</span>
<span class="t" id="t142" style="top:512.00px;font-size:8px;line-height:11px;color:#212121;left:176.4px;">5</span>
<span class="t" id="t143" style="top:512.00px;font-size:8px;line-height:11px;color:#212121;left:188.7px;letter-spacing:-0.208px;">AW - YouTube</span>
<span class="t" id="t144" style="top:512.00px;font-size:8px;line-height:11px;color:#2a2a2a;left:264.6px;letter-spacing:-0.182px;-webkit-text-stroke:0.04px #2a2a2a;">2,298</span>
<span class="t" id="t145" style="top:512.00px;font-size:8px;line-height:11px;color:#2a2a2a;left:377.1px;letter-spacing:-0.173px;-webkit-text-stroke:0.04px #2a2a2a;">255</span>
<span class="t" id="t146" style="top:514.00px;font-size:7.6px;line-height:10px;color:#c4c4c4;right:794.60px;letter-spacing:-0.248px;margin-right:0.248px;">11.10%</span>
<span class="t" id="t147" style="top:512.00px;font-size:8px;line-height:11px;color:#2a2a2a;left:490.1px;letter-spacing:-0.173px;-webkit-text-stroke:0.04px #2a2a2a;">44</span>
<span class="t" id="t148" style="top:514.00px;font-size:7.6px;line-height:10px;color:#c4c4c4;right:681.60px;letter-spacing:-0.366px;margin-right:0.366px;">1.91%</span>
<span class="t" id="t149" style="top:512.00px;font-size:8px;line-height:11px;color:#2a2a2a;left:603.0999999999999px;letter-spacing:-0.173px;-webkit-text-stroke:0.04px #2a2a2a;">23</span>
<span class="t" id="t150" style="top:514.00px;font-size:7.6px;line-height:10px;color:#c4c4c4;right:568.80px;letter-spacing:-0.366px;margin-right:0.366px;">1.00%</span>
<span class="t" id="t151" style="top:512.00px;font-size:8px;line-height:11px;color:#2a2a2a;left:715.9px;letter-spacing:-0.173px;-webkit-text-stroke:0.04px #2a2a2a;">8</span>
<span class="t" id="t152" style="top:514.00px;font-size:7.6px;line-height:10px;color:#c4c4c4;right:456.00px;letter-spacing:-0.366px;margin-right:0.366px;">0.35%</span>
<span class="t" id="t153" style="top:530.00px;font-size:8px;line-height:11px;color:#212121;left:176.4px;">6</span>
<span class="t" id="t154" style="top:530.00px;font-size:8px;line-height:11px;color:#212121;left:188.7px;letter-spacing:-0.081px;">AW - Accessories</span>
<span class="t" id="t155" style="top:530.00px;font-size:8px;line-height:11px;color:#2a2a2a;left:264.6px;letter-spacing:-0.182px;-webkit-text-stroke:0.04px #2a2a2a;">1,692</span>
<span class="t" id="t156" style="top:530.00px;font-size:8px;line-height:11px;color:#2a2a2a;left:377.1px;letter-spacing:-0.173px;-webkit-text-stroke:0.04px #2a2a2a;">562</span>
<span class="t" id="t157" style="top:531.00px;font-size:7.6px;line-height:10px;color:#c4c4c4;right:794.60px;letter-spacing:-0.342px;margin-right:0.342px;">33.22%</span>
<span class="t" id="t158" style="top:530.00px;font-size:8px;line-height:11px;color:#2a2a2a;left:490.1px;letter-spacing:-0.173px;-webkit-text-stroke:0.04px #2a2a2a;">106</span>
<span class="t" id="t159" style="top:531.00px;font-size:7.6px;line-height:10px;color:#c4c4c4;right:681.60px;letter-spacing:-0.366px;margin-right:0.366px;">6.26%</span>
<span class="t" id="t160" style="top:530.00px;font-size:8px;line-height:11px;color:#2a2a2a;left:603.0999999999999px;letter-spacing:-0.173px;-webkit-text-stroke:0.04px #2a2a2a;">47</span>
<span class="t" id="t161" style="top:531.00px;font-size:7.6px;line-height:10px;color:#c4c4c4;right:568.80px;letter-spacing:-0.366px;margin-right:0.366px;">2.78%</span>
<span class="t" id="t162" style="top:530.00px;font-size:8px;line-height:11px;color:#2a2a2a;left:715.9px;letter-spacing:-0.173px;-webkit-text-stroke:0.04px #2a2a2a;">7</span>
<span class="t" id="t163" style="top:531.00px;font-size:7.6px;line-height:10px;color:#c4c4c4;right:456.00px;letter-spacing:-0.366px;margin-right:0.366px;">0.41%</span>
<span class="t" id="t164" style="top:548.00px;font-size:8px;line-height:11px;color:#212121;left:176.4px;">7</span>
<span class="t" id="t165" style="top:548.00px;font-size:8px;line-height:11px;color:#212121;left:188.7px;letter-spacing:-0.271px;">AW - Bags</span>
<span class="t" id="t166" style="top:548.00px;font-size:8px;line-height:11px;color:#2a2a2a;left:264.6px;letter-spacing:-0.173px;-webkit-text-stroke:0.04px #2a2a2a;">492</span>
<span class="t" id="t167" style="top:548.00px;font-size:8px;line-height:11px;color:#2a2a2a;left:377.1px;letter-spacing:-0.173px;-webkit-text-stroke:0.04px #2a2a2a;">224</span>
<span class="t" id="t168" style="top:549.00px;font-size:7.6px;line-height:10px;color:#c4c4c4;right:794.60px;letter-spacing:-0.342px;margin-right:0.342px;">45.53%</span>
<span class="t" id="t169" style="top:548.00px;font-size:8px;line-height:11px;color:#2a2a2a;left:490.1px;letter-spacing:-0.173px;-webkit-text-stroke:0.04px #2a2a2a;">13</span>
<span class="t" id="t170" style="top:549.00px;font-size:7.6px;line-height:10px;color:#c4c4c4;right:681.60px;letter-spacing:-0.366px;margin-right:0.366px;">2.64%</span>
<span class="t" id="t171" style="top:548.00px;font-size:8px;line-height:11px;color:#2a2a2a;left:603.0999999999999px;letter-spacing:0.124px;-webkit-text-stroke:0.04px #2a2a2a;">11</span>
<span class="t" id="t172" style="top:549.00px;font-size:7.6px;line-height:10px;color:#c4c4c4;right:568.80px;letter-spacing:-0.366px;margin-right:0.366px;">2.24%</span>
<span class="t" id="t173" style="top:548.00px;font-size:8px;line-height:11px;color:#2a2a2a;left:715.9px;letter-spacing:-0.173px;-webkit-text-stroke:0.04px #2a2a2a;">2</span>
<span class="t" id="t174" style="top:549.00px;font-size:7.6px;line-height:10px;color:#c4c4c4;right:456.00px;letter-spacing:-0.366px;margin-right:0.366px;">0.41%</span>
<span class="t" id="t175" style="top:566.00px;font-size:8px;line-height:11px;color:#212121;left:176.4px;">8</span>
<span class="t" id="t176" style="top:566.00px;font-size:8px;line-height:11px;color:#212121;left:188.7px;letter-spacing:-0.187px;">AW - Drinkware</span>
<span class="t" id="t177" style="top:566.00px;font-size:8px;line-height:11px;color:#2a2a2a;left:264.6px;letter-spacing:-0.173px;-webkit-text-stroke:0.04px #2a2a2a;">488</span>
<span class="t" id="t178" style="top:566.00px;font-size:8px;line-height:11px;color:#2a2a2a;left:377.1px;letter-spacing:-0.173px;-webkit-text-stroke:0.04px #2a2a2a;">202</span>
<span class="t" id="t179" style="top:567.00px;font-size:7.6px;line-height:10px;color:#c4c4c4;right:794.60px;letter-spacing:-0.342px;margin-right:0.342px;">41.39%</span>
<span class="t" id="t180" style="top:566.00px;font-size:8px;line-height:11px;color:#2a2a2a;left:490.1px;letter-spacing:-0.173px;-webkit-text-stroke:0.04px #2a2a2a;">31</span>
<span class="t" id="t181" style="top:567.00px;font-size:7.6px;line-height:10px;color:#c4c4c4;right:681.60px;letter-spacing:-0.366px;margin-right:0.366px;">6.35%</span>
<span class="t" id="t182" style="top:566.00px;font-size:8px;line-height:11px;color:#2a2a2a;left:603.0999999999999px;letter-spacing:0.124px;-webkit-text-stroke:0.04px #2a2a2a;">11</span>
<span class="t" id="t183" style="top:567.00px;font-size:7.6px;line-height:10px;color:#c4c4c4;right:568.80px;letter-spacing:-0.366px;margin-right:0.366px;">2.25%</span>
<span class="t" id="t184" style="top:566.00px;font-size:8px;line-height:11px;color:#2a2a2a;left:715.9px;letter-spacing:-0.173px;-webkit-text-stroke:0.04px #2a2a2a;">0</span>
<span class="t" id="t185" style="top:567.00px;font-size:7.6px;line-height:10px;color:#c4c4c4;right:456.00px;letter-spacing:-0.366px;margin-right:0.366px;">0.00%</span>
<span class="t" id="t186" style="top:583.00px;font-size:8px;line-height:11px;color:#212121;left:176.4px;">9</span>
<span class="t" id="t187" style="top:583.00px;font-size:8px;line-height:11px;color:#212121;left:188.7px;letter-spacing:-0.178px;">AW - Office</span>
<span class="t" id="t188" style="top:583.00px;font-size:8px;line-height:11px;color:#2a2a2a;left:264.6px;letter-spacing:-0.173px;-webkit-text-stroke:0.04px #2a2a2a;">322</span>
<span class="t" id="t189" style="top:583.00px;font-size:8px;line-height:11px;color:#2a2a2a;left:377.1px;letter-spacing:-0.173px;-webkit-text-stroke:0.04px #2a2a2a;">101</span>
<span class="t" id="t190" style="top:584.00px;font-size:7.6px;line-height:10px;color:#c4c4c4;right:794.60px;letter-spacing:-0.342px;margin-right:0.342px;">31.37%</span>
<span class="t" id="t191" style="top:583.00px;font-size:8px;line-height:11px;color:#2a2a2a;left:490.1px;letter-spacing:-0.173px;-webkit-text-stroke:0.04px #2a2a2a;">26</span>
<span class="t" id="t192" style="top:584.00px;font-size:7.6px;line-height:10px;color:#c4c4c4;right:681.60px;letter-spacing:-0.366px;margin-right:0.366px;">8.07%</span>
<span class="t" id="t193" style="top:583.00px;font-size:8px;line-height:11px;color:#2a2a2a;left:603.0999999999999px;letter-spacing:-0.173px;-webkit-text-stroke:0.04px #2a2a2a;">7</span>
<span class="t" id="t194" style="top:584.00px;font-size:7.6px;line-height:10px;color:#c4c4c4;right:568.80px;letter-spacing:-0.366px;margin-right:0.366px;">2.17%</span>
<span class="t" id="t195" style="top:583.00px;font-size:8px;line-height:11px;color:#2a2a2a;left:715.9px;letter-spacing:-0.173px;-webkit-text-stroke:0.04px #2a2a2a;">0</span>
<span class="t" id="t196" style="top:584.00px;font-size:7.6px;line-height:10px;color:#c4c4c4;right:456.00px;letter-spacing:-0.366px;margin-right:0.366px;">0.00%</span>
<span class="t" id="t197" style="top:598.00px;font-size:8px;line-height:11px;color:#212121;left:176.4px;letter-spacing:-0.353px;">10</span>
<span class="t" id="t198" style="top:598.00px;font-size:8px;line-height:11px;color:#212121;left:193.2px;letter-spacing:-0.129px;">AW - Android</span>
<span class="t" id="t199" style="top:606.00px;font-size:8px;line-height:11px;color:#212121;left:176.4px;letter-spacing:-0.152px;">Brand</span>
<span class="t" id="t200" style="top:602.00px;font-size:8px;line-height:11px;color:#2a2a2a;left:264.6px;letter-spacing:-0.173px;-webkit-text-stroke:0.04px #2a2a2a;">227</span>
<span class="t" id="t201" style="top:602.00px;font-size:8px;line-height:11px;color:#2a2a2a;left:377.1px;letter-spacing:-0.173px;-webkit-text-stroke:0.04px #2a2a2a;">64</span>
<span class="t" id="t202" style="top:603.00px;font-size:7.6px;line-height:10px;color:#c4c4c4;right:794.60px;letter-spacing:-0.342px;margin-right:0.342px;">28.19%</span>
<span class="t" id="t203" style="top:602.00px;font-size:8px;line-height:11px;color:#2a2a2a;left:490.1px;letter-spacing:-0.173px;-webkit-text-stroke:0.04px #2a2a2a;">3</span>
<span class="t" id="t204" style="top:603.00px;font-size:7.6px;line-height:10px;color:#c4c4c4;right:681.60px;letter-spacing:-0.366px;margin-right:0.366px;">1.32%</span>
<span class="t" id="t205" style="top:602.00px;font-size:8px;line-height:11px;color:#2a2a2a;left:603.0999999999999px;letter-spacing:-0.173px;-webkit-text-stroke:0.04px #2a2a2a;">2</span>
<span class="t" id="t206" style="top:603.00px;font-size:7.6px;line-height:10px;color:#c4c4c4;right:568.80px;letter-spacing:-0.366px;margin-right:0.366px;">0.88%</span>
<span class="t" id="t207" style="top:602.00px;font-size:8px;line-height:11px;color:#2a2a2a;left:715.9px;letter-spacing:-0.173px;-webkit-text-stroke:0.04px #2a2a2a;">0</span>
<span class="t" id="t208" style="top:603.00px;font-size:7.6px;line-height:10px;color:#c4c4c4;right:456.00px;letter-spacing:-0.366px;margin-right:0.366px;">0.00%</span>
<span class="t" id="t209" style="top:620.00px;font-size:8px;line-height:11px;color:#666;left:596.8px;letter-spacing:-0.036px;">Show rows:</span>
<div style="left:640.5px;top:619px;width:30.3px;height:13.3px;background:#fff;box-sizing:border-box;border:1px solid #666;border-radius:2px;"></div>
<span class="t" id="t210" style="top:620.00px;font-size:8px;line-height:11px;color:#212121;left:644px;">10</span>
<svg class="i" style="left:658.5px;top:623px" width="8" height="5.5" viewBox="0 0 8 5.5" fill="none" stroke="#111" stroke-width="1.7"><path d="M0.8 0.8L4 4.2 7.2 0.8"/></svg>
<span class="t" id="t211" style="top:620.00px;font-size:8px;line-height:11px;color:#666;left:683.7px;letter-spacing:-0.299px;">Go to:</span>
<div style="left:707.3px;top:619.2px;width:20.6px;height:13.1px;background:#fff;box-sizing:border-box;border:1px solid #d4d4d4;"></div>
<span class="t" id="t212" style="top:620.00px;font-size:8px;line-height:11px;color:#212121;left:710.6px;">1</span>
<span class="t" id="t213" style="top:620.00px;font-size:8px;line-height:11px;color:#6a6a6a;left:739.6px;letter-spacing:-0.091px;">1 - 10 of 11</span>
<div style="left:783.4px;top:619.5px;width:33px;height:12.9px;box-sizing:border-box;border:1px solid #d4d4d4;border-bottom-color:#c4c4c4;border-radius:2px;background:linear-gradient(#fafafa,#e9e9e9);"></div>
<div style="left:799.5px;top:619.5px;width:1px;height:12.9px;background:#d0d0d0;"></div>
<svg class="i" style="left:790.3px;top:623.2px" width="3.6" height="5" viewBox="0 0 5 7" fill="none" stroke="#222" stroke-width="2.2"><path d="M4 0.7L1.2 3.5 4 6.3"/></svg>
<svg class="i" style="left:806.6px;top:623.2px" width="3.6" height="5" viewBox="0 0 5 7" fill="none" stroke="#222" stroke-width="2.2"><path d="M1 0.7L3.8 3.5 1 6.3"/></svg>
<div style="left:169px;top:411.3px;width:89.6px;height:208.4px;box-sizing:border-box;border:2px solid #bd2430;border-radius:1px;"></div>
<span class="t" id="t214" style="top:667.00px;font-size:8.6px;line-height:12px;color:#80868b;left:544.2px;letter-spacing:0.066px;">&copy; 2020 Google</span>
<span class="t" id="t215" style="top:667.00px;font-size:8.6px;line-height:12px;color:#4879d4;left:605.4px;">|</span>
<a class="t" id="t216" style="top:667.00px;font-size:8.6px;line-height:12px;color:#4879d4;left:610.1px;letter-spacing:0.121px;">Analytics Home</a>
<span class="t" id="t217" style="top:667.00px;font-size:8.6px;line-height:12px;color:#4879d4;left:673.9px;">|</span>
<a class="t" id="t218" style="top:667.00px;font-size:8.6px;line-height:12px;color:#4879d4;left:678.6px;letter-spacing:0.069px;">Terms of Service</a>
<span class="t" id="t219" style="top:667.00px;font-size:8.6px;line-height:12px;color:#4879d4;left:746.4px;">|</span>
<a class="t" id="t220" style="top:667.00px;font-size:8.6px;line-height:12px;color:#4879d4;left:750.8px;letter-spacing:0.023px;">Privacy Policy</a>
<span class="t" id="t221" style="top:667.00px;font-size:8.6px;line-height:12px;color:#4879d4;left:807.2px;">|</span>
<a class="t" id="t222" style="top:667.00px;font-size:8.6px;line-height:12px;color:#4879d4;left:811.9px;letter-spacing:-0.016px;">Send Feedback</a>
</div>
</body></html>
